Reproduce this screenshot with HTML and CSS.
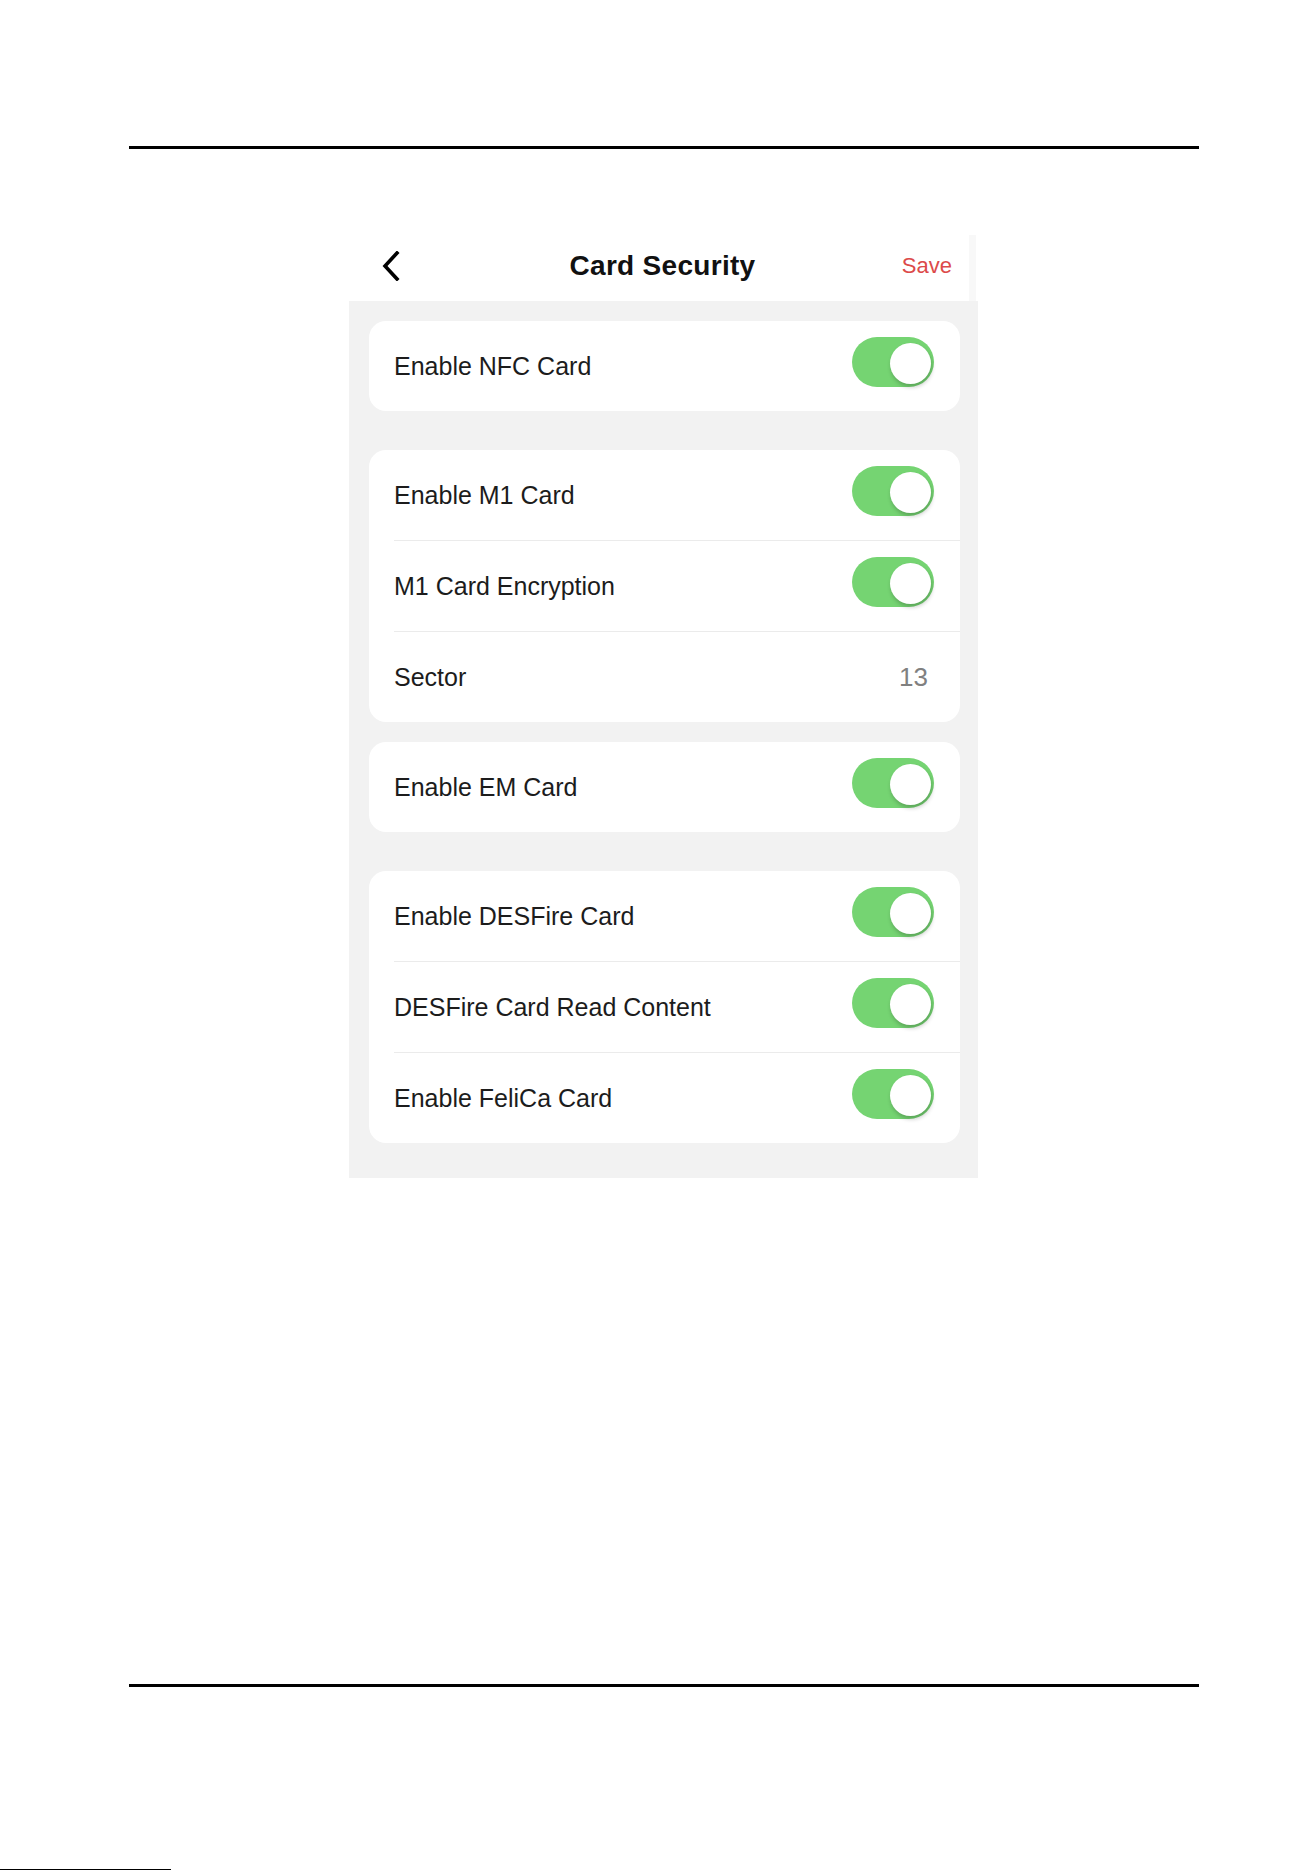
FILE: index.html
```html
<!DOCTYPE html>
<html lang="en">
<head>
<meta charset="UTF-8">
<meta name="viewport" content="width=device-width, initial-scale=1.0">
<title>Card Security</title>
<link rel="stylesheet" href="styles.css">
</head>
<body>

<div class="rule rule-top"></div>

<div class="phone">
  <header class="topbar">
    <span class="back">
      <svg width="20" height="30" viewBox="0 0 20 30"><path d="M16 2 L4 15 L16 28" fill="none" stroke="#000" stroke-width="3.6" stroke-linecap="square"/></svg>
    </span>
    <h1>Card Security</h1>
    <span class="save">Save</span>
  </header>

  <main class="content">
    <!-- NFC -->
    <section class="group gap-big">
      <div class="row"><span>Enable NFC Card</span><i class="switch on"></i></div>
    </section>

    <!-- M1 -->
    <section class="group gap-small">
      <div class="row"><span>Enable M1 Card</span><i class="switch on"></i></div>
      <div class="row"><span>M1 Card Encryption</span><i class="switch on"></i></div>
      <div class="row"><span>Sector</span><em class="value">13</em></div>
    </section>

    <!-- EM -->
    <section class="group gap-big">
      <div class="row"><span>Enable EM Card</span><i class="switch on"></i></div>
    </section>

    <!-- DESFire / FeliCa -->
    <section class="group">
      <div class="row"><span>Enable DESFire Card</span><i class="switch on"></i></div>
      <div class="row"><span>DESFire Card Read Content</span><i class="switch on"></i></div>
      <div class="row"><span>Enable FeliCa Card</span><i class="switch on"></i></div>
    </section>
  </main>
</div>

<div class="rule rule-bottom"></div>
<div class="edge"></div>

</body>
</html>
```

FILE: styles.css
```css
html, body { height: 1873px; overflow: hidden; }
body {
  margin: 0;
  background: #fff;
  font-family: "Liberation Sans", Arial, sans-serif;
  color: #1c1c1c;
}

.rule { height: 3px; background: #000; margin-left: 129px; width: 1070px; }
.rule-top { margin-top: 146px; }
.rule-bottom { margin-top: 506px; }
.edge { height: 1px; width: 171px; background: #000; margin-top: 182px; }

.phone { width: 629px; margin: 86px 0 0 349px; }

/* Top bar */
.topbar {
  width: 570px;
  height: 62px;
  background: #fff;
  border-right: 7px solid #f8f8f8;
  display: flex;
  align-items: center;
  justify-content: space-between;
  padding: 0 17px 4px 33px;
  box-sizing: content-box;
}
.back { display: flex; width: 60px; margin-left: -1px; }
.topbar h1 {
  margin: 0 0 0 -8px;
  font-size: 28px;
  font-weight: bold;
  letter-spacing: 0.3px;
  color: #111;
}
.save { width: 60px; text-align: right; font-size: 22px; color: #dc4a4a; }

/* Content */
.content { background: #f2f2f2; padding: 20px 18px 35px 20px; }
.group { background: #fff; border-radius: 17px; margin-bottom: 20px; overflow: hidden; }
.group:last-child { margin-bottom: 0; }
.group.gap-big { margin-bottom: 39px; }

.row {
  height: 90px;
  margin-left: 25px;
  padding-right: 26px;
  display: flex;
  align-items: center;
  justify-content: space-between;
  border-top: 1px solid #ebebeb;
  font-size: 25px;
}
.row:first-child { border-top: none; }
.row span { margin-top: 1px; }
.value { font-style: normal; font-size: 26px; color: #808080; margin-right: 6px; }

/* Switch */
.switch {
  position: relative;
  width: 82px;
  height: 50px;
  margin-bottom: 9px;
  border-radius: 25px;
  background: #e2e2e2;
}
.switch.on { background: #75d472; }
.switch::after {
  content: "";
  position: absolute;
  top: 6px;
  right: 3px;
  width: 41px;
  height: 41px;
  border-radius: 50%;
  background: #fff;
  box-shadow: 1px 3px 4px rgba(0,0,0,0.22);
}
```
